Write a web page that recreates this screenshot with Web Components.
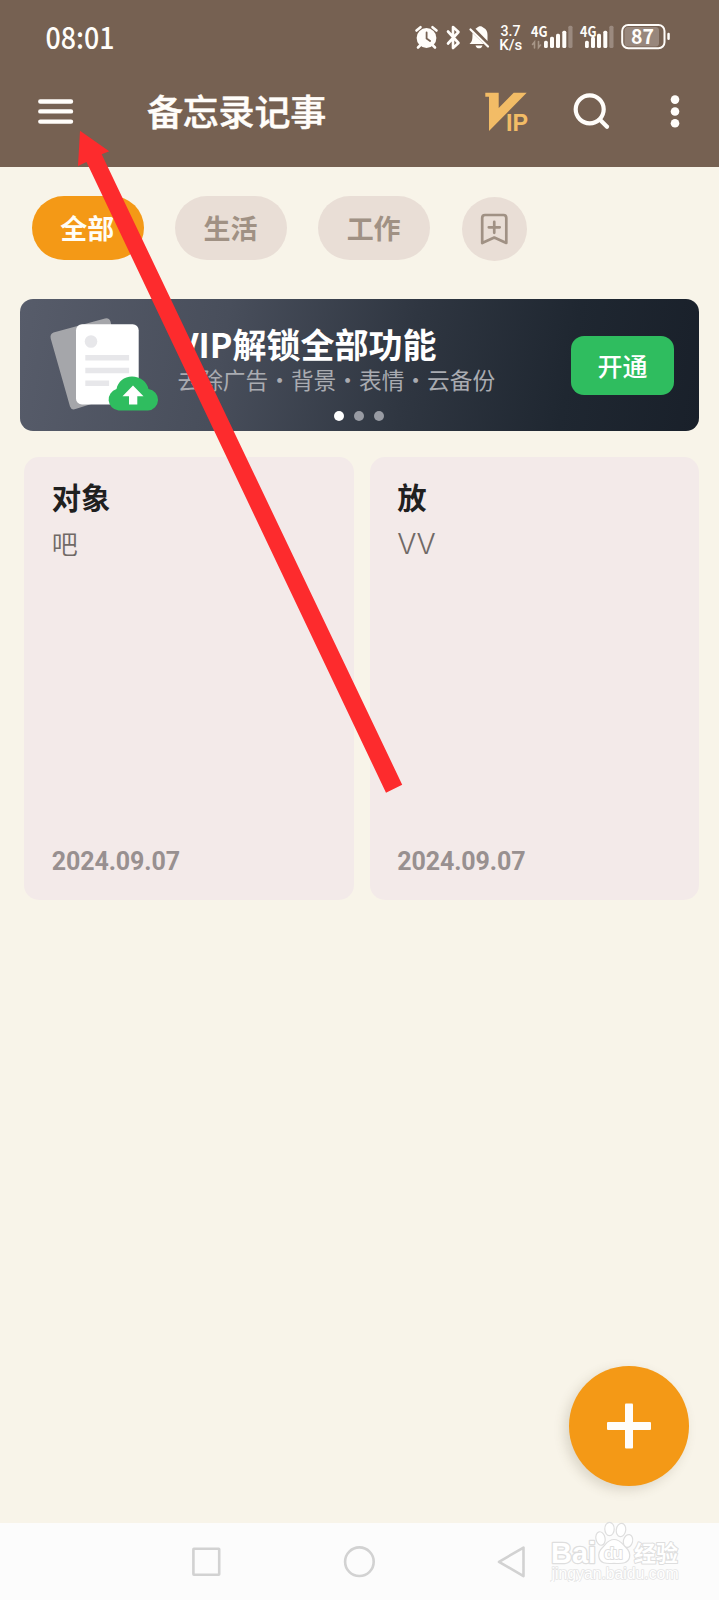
<!DOCTYPE html>
<html lang="zh-CN">
<head>
<meta charset="utf-8">
<title>备忘录记事</title>
<style>
html,body{margin:0;padding:0}
body{font-family:"Noto Sans CJK SC","Liberation Sans",sans-serif;background:#f8f4e9}
</style>
</head>
<body>
<memo-app></memo-app>
<script>
const define = (name, html) => customElements.define(name, class extends HTMLElement {
  constructor() {
    super();
    this.attachShadow({mode: 'open'}).innerHTML = html;
  }
});

define('status-bar', `
<style>
:host{display:flex;height:74px;justify-content:space-between;color:#fff}
svg{display:block}
text{fill:#fffdfa}
</style>
<svg width="160" height="74"><text x="45.5" y="48.700" font-family="Noto Sans CJK SC" font-weight="500" font-size="29.5" textLength="69" lengthAdjust="spacingAndGlyphs">08:01</text></svg>
<svg width="319" height="74" viewBox="400 0 319 74" fill="#fffdfa" stroke-linecap="round">
  <circle cx="426.5" cy="38" r="9.900"/>
  <path d="M416.500 30.500l4-3.300M436.500 30.500l-4-3.300M420 45.500l-2 2M433 45.500l2 2" stroke="#fffdfa" stroke-width="2.600"/>
  <path d="M426.600 32.500v6l3.500 2.500" fill="none" stroke="#766152" stroke-width="1.800"/>
  <path d="M448 31.500l10.500 11.500-5.500 5v-21l5.500 5L448 43.500" fill="none" stroke="#fffdfa" stroke-width="2.600" stroke-linejoin="round"/>
  <path d="M469.500 44c3-2.500 3-5 3-11l11.500 11zM475.500 28.800l1.500-1c1.500-2.200 5-2.200 6.500 0 3 1.600 4 4 4 7.200v6zM475.500 45.500h7c-1 3.800-6 3.800-7 0z"/>
  <path d="M470.500 29.500l17.500 17" stroke="#fffdfa" stroke-width="2.200"/>
  <text x="500.500" y="35.900" font-family="Roboto" font-weight="500" font-size="15" textLength="20" lengthAdjust="spacingAndGlyphs">3.7</text>
  <text x="499.300" y="49.900" font-family="Roboto" font-weight="500" font-size="15" textLength="23" lengthAdjust="spacingAndGlyphs">K/s</text>
  <text x="531" y="37" font-family="Noto Sans CJK SC" font-weight="700" font-size="14.500" textLength="16.500" lengthAdjust="spacingAndGlyphs">4G</text>
  <g id="bars"><rect x="544" y="40.700" width="3.800" height="7.300" rx="1.500"/><rect x="550" y="36.700" width="4" height="11.300" rx="1.500"/><rect x="556" y="33.700" width="4" height="14.300" rx="1.500"/><rect x="562.300" y="30.700" width="4" height="17.300" rx="1.500"/><rect x="568.300" y="25.700" width="4.200" height="22.300" rx="1.500" opacity=".27"/></g>
  <path d="M534.500 48v-6l-2 2.500M538.500 41.500v6l2-2.500" fill="none" stroke="#a79688" stroke-width="1.600"/>
  <text x="580" y="37" font-family="Noto Sans CJK SC" font-weight="700" font-size="14.500" textLength="16.500" lengthAdjust="spacingAndGlyphs">4G</text>
  <use href="#bars" x="41"/>
  <rect x="624.500" y="27" width="34.500" height="19.500" rx="3.500" opacity=".25"/>
  <rect x="622.200" y="25" width="42.300" height="23.300" rx="6" fill="none" stroke="#fffdfa" stroke-width="2"/>
  <rect x="667.300" y="32.700" width="2.500" height="7.300" rx="1.200"/>
  <text x="631" y="44.200" font-family="Noto Sans CJK SC" font-weight="700" font-size="20.500" textLength="23" lengthAdjust="spacingAndGlyphs">87</text>
</svg>`);

define('app-bar', `
<style>
:host{display:grid;grid-template-columns:147px 1fr 98px 87px 54px;height:93px;color:#fffdfa}
h1{margin:10px 0 0;font-size:36px;line-height:52px;font-weight:500;-webkit-text-stroke:.5px #fffdfa;letter-spacing:-.2px;white-space:nowrap}
svg{display:block;overflow:visible}
</style>
<svg width="147" height="93" viewBox="0 74 147 93" stroke="#fffdfa" stroke-width="4.400" stroke-linecap="round"><path d="M40.300 101.500h30.700M40.300 111.400h30.700M40.300 121.600h30.700"/></svg>
<h1>备忘录记事</h1>
<svg width="98" height="93" viewBox="480 74 98 93"><path d="M485.300 92.700h13.400v15.200l15-15.200h13L489 131V96.700h-3.700z" fill="#f2bc66"/><text x="506" y="130.700" font-family="Liberation Sans" font-weight="700" font-size="23.300" fill="#f2bc66" textLength="22" lengthAdjust="spacingAndGlyphs">IP</text></svg>
<svg width="87" height="93" viewBox="578 74 87 93" fill="none" stroke="#fffdfa" stroke-width="4.200" stroke-linecap="round"><circle cx="589.700" cy="109.300" r="14"/><path d="M600 119.700l7 7"/></svg>
<svg width="54" height="93" viewBox="665 74 54 93" fill="#fffdfa"><circle cx="675" cy="99.600" r="4.300"/><circle cx="675" cy="111.500" r="4.300"/><circle cx="675" cy="123.300" r="4.300"/></svg>`);

define('tab-chip', `
<style>
:host{display:flex;align-items:center;justify-content:center;width:111.500px;height:64px;border-radius:32px;background:#e9ded6;color:#a09184;font-size:27px;font-weight:700;line-height:40px;text-indent:-1px}
:host([active]){background:#f49916;color:#fffdf6}
:host([round]){width:65.500px;border-radius:50%;margin-top:1px}
</style><slot></slot>`);

define('tab-row', `
<style>:host{display:flex;gap:31.700px;padding:29px 32px 0;height:131.500px;box-sizing:border-box}svg{display:block}</style>
<tab-chip active>全部</tab-chip><tab-chip>生活</tab-chip><tab-chip>工作</tab-chip>
<tab-chip round><svg width="28" height="34" viewBox="-1 0 28 34" fill="none" stroke="#a09184" stroke-width="2.700" stroke-linejoin="round" stroke-linecap="round"><path d="M1.200 31V6Q1.200 3 4 3H22.500Q25.300 3 25.300 6V31L13.250 25.500zM7.800 15.300h10.900M13.250 9.800v11"/></svg></tab-chip>`);

define('promo-banner', `
<style>
:host{display:grid;grid-template-columns:157.500px 1fr 128px;position:relative;height:132px;margin:0 20px;border-radius:13px;overflow:hidden;background:linear-gradient(100deg,#575c6a 0%,#484e5b 30%,#2f3641 57%,#1f2731 80%,#19202a 100%)}
.art{display:block}
h2{margin:20px 0 0;font-size:34px;line-height:50px;font-weight:700;color:#fff;white-space:nowrap}
p{margin:-6px 0 0;font-size:22.700px;line-height:34px;color:#a9abb1;white-space:nowrap}
button{all:unset;align-self:start;margin:37.500px 0 0;width:103px;height:59px;line-height:59px;border-radius:13px;background:#2fbd5f;color:#fff;text-align:center;font-size:25px;font-weight:500}
.dots{position:absolute;left:314px;top:112px;display:flex;gap:9.900px}
.dots i{width:10px;height:10px;border-radius:50%;background:#989ba3}
.dots i:first-child{background:#fff}
</style>
<svg class="art" width="157" height="132" viewBox="20 298.500 157 132">
  <path d="M53.500 332L105 318q4-1 5.500 3l17 71-52 16.500q-4 1.500-5.500-2.500L50.700 338q-1-4.500 2.800-6z" fill="#a5a6aa"/>
  <rect x="76" y="323.700" width="62.700" height="80.300" rx="6" fill="#fff"/>
  <circle cx="91" cy="341" r="6.300" fill="#e7e7ea"/>
  <path d="M85.300 357.300h43.800M85.300 370h43.800M85.300 382.700h23.800" stroke="#e7e7ea" stroke-width="5.500"/>
  <path d="M118.500 410a11 11 0 0 1-2-21.500C118 381 124 376 132 376s15 5 16.500 12.500a10.800 10.800 0 0 1-.5 21.500z" fill="#2fbd5f"/>
  <path d="M133 385l10.500 10.700h-6.200v8.300h-8.300v-8.300h-6.500z" fill="#fff"/>
</svg>
<div><h2>VIP解锁全部功能</h2><p>去除广告・背景・表情・云备份</p></div>
<button>开通</button>
<div class="dots"><i></i><i></i><i></i></div>`);

define('note-card', `
<style>
:host{display:flex;flex-direction:column;height:443px;box-sizing:border-box;border-radius:15px;background:#f3eae9;padding:18px 27.700px 21px}
.t{font-size:29.300px;line-height:42px;font-weight:700;color:#20201f}
.b{font-size:26px;line-height:38px;height:38px;margin-top:7px;font-weight:350;color:#706966}
.d{margin-top:auto;font:700 25px/34px Roboto,sans-serif;letter-spacing:-.1px;color:#989090}
</style>
<div class="t"><slot name="title"></slot></div><div class="b"><slot></slot></div><div class="d"><slot name="date"></slot></div>`);

define('note-grid', `
<style>:host{display:grid;grid-template-columns:1fr 1fr;gap:16px;padding:26px 20px 0 24px}.latin{font:300 28.500px/38px Inter,sans-serif;letter-spacing:-.3px}</style>
<note-card><span slot="title">对象</span>吧<span slot="date">2024.09.07</span></note-card>
<note-card><span slot="title">放</span><span class="latin">VV</span><span slot="date">2024.09.07</span></note-card>`);

define('add-button', `
<style>:host{display:flex;align-items:center;justify-content:center;width:119.500px;height:119.500px;border-radius:50%;background:#f49916;box-shadow:-4px 4px 12px rgba(90,80,50,.18)}</style>
<svg width="46" height="46" viewBox="0 0 46 46" fill="#fffdfa"><rect x="1" y="19" width="44" height="8" rx="1"/><rect x="19" y=".5" width="8" height="45" rx="1"/></svg>`);

define('nav-bar', `
<style>:host{display:block;height:77.300px;background:#fcfcfc}svg{display:block}</style>
<svg width="719" height="77" viewBox="0 1522.700 719 77" fill="none" stroke="#d2d2d2" stroke-width="2.600" stroke-linejoin="round">
<rect x="193.400" y="1548.400" width="25.800" height="26" rx=".5"/><circle cx="359.400" cy="1561.400" r="14.300"/><path d="M499 1561.500L523.500 1547.300v28.500z"/></svg>`);

define('site-mark', `
<style>:host{display:block}svg{display:block}text{paint-order:stroke;stroke-linejoin:round}</style>
<svg width="140" height="64" viewBox="545 1518 140 64" fill="#fff" stroke="#dedede" stroke-width="1.500">
<text x="551" y="1562.500" font-family="Liberation Sans" font-weight="700" font-size="29" stroke-width="2.500" textLength="45" lengthAdjust="spacingAndGlyphs">Bai</text>
<g stroke-width="1.200"><ellipse cx="600.500" cy="1538.500" rx="4.600" ry="6.800" transform="rotate(-12 600.500 1538.500)"/><ellipse cx="609.500" cy="1529" rx="4.700" ry="6.700"/><ellipse cx="621" cy="1530" rx="4.700" ry="6.700" transform="rotate(8 621 1530)"/><ellipse cx="628" cy="1541" rx="4.600" ry="6.500" transform="rotate(14 628 1541)"/>
<path d="M614 1539.500c-6 0-8 4.500-11 7.500-3.500 3.200-5 6-4 10.500 1.300 5.500 6 6.500 15 5.800 9 .7 14-.3 15.500-5.800 1-4.500-.5-7.300-4-10.500-3-3-5.500-7.500-11.500-7.500z"/></g>
<text x="604" y="1559" font-family="Liberation Sans" font-weight="700" font-size="17" stroke-width="1.800" textLength="19">du</text>
<text x="634" y="1561" font-family="Noto Sans CJK SC" font-weight="700" font-size="22" stroke-width="2">经验</text>
<text x="551.500" y="1579" font-family="Liberation Sans" font-size="16" stroke="#e4e4e4" stroke-width="1.600" textLength="127" lengthAdjust="spacingAndGlyphs">jingyan.baidu.com</text></svg>`);

define('pointer-arrow', `
<style>:host{display:block;pointer-events:none}svg{display:block}</style>
<svg width="330" height="670" viewBox="75 128 330 670"><path d="M80 130.700L109.200 151.300 101.700 154.300 402.200 784.700 386 792.700 86.500 162 78 166z" fill="#fd2b2d"/></svg>`);

define('memo-app', `
<style>
:host{display:flex;flex-direction:column;position:relative;width:719px;height:1600px;overflow:hidden;background:#f8f4e9}
header{background:#766152}
main{flex:1}
add-button,site-mark,pointer-arrow{position:absolute}
add-button{left:569.300px;top:1366.200px}
site-mark{left:545px;top:1518px}
pointer-arrow{left:75px;top:128px}
</style>
<header><status-bar></status-bar><app-bar></app-bar></header>
<main><tab-row></tab-row><promo-banner></promo-banner><note-grid></note-grid></main>
<nav-bar></nav-bar>
<add-button></add-button><site-mark></site-mark><pointer-arrow></pointer-arrow>`);
</script>
</body>
</html>
